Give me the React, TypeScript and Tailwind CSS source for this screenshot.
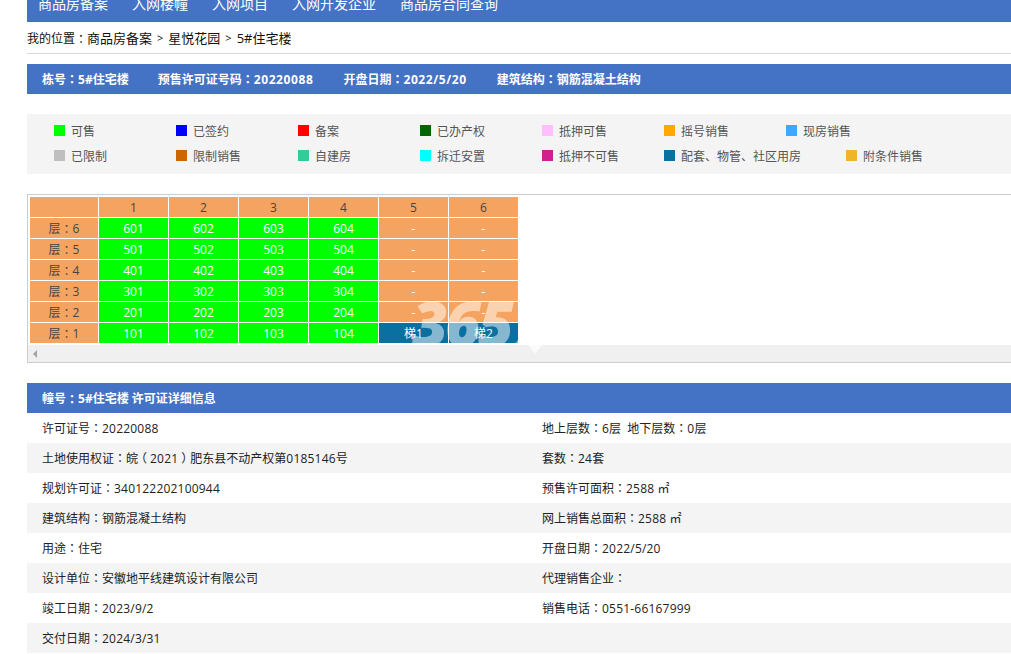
const font = { fontFamily: '"Open Sans", "Noto Sans CJK SC", sans-serif' };

const navItems = ['商品房备案', '入网楼幢', '入网项目', '入网开发企业', '商品房合同查询'];

const legendRows = [
  [
    ['可售', 'bg-[#00ff00]'],
    ['已签约', 'bg-[#0000ff]'],
    ['备案', 'bg-[#ff0000]'],
    ['已办产权', 'bg-[#006400]'],
    ['抵押可售', 'bg-[#ffbfff]'],
    ['摇号销售', 'bg-[#ffa800]'],
    ['现房销售', 'bg-[#3fa7ff]'],
  ],
  [
    ['已限制', 'bg-[#bfbfbf]'],
    ['限制销售', 'bg-[#cc6600]'],
    ['自建房', 'bg-[#33cc99]'],
    ['拆迁安置', 'bg-[#00ffff]'],
    ['抵押不可售', 'bg-[#d02090]'],
    ['配套、物管、社区用房', 'bg-[#0a70a0]'],
    ['附条件销售', 'bg-[#f0b428]'],
  ],
];

const floors = [6, 5, 4, 3, 2, 1];

const details: [string, string][] = [
  ['许可证号：20220088', '地上层数：6层  地下层数：0层'],
  ['土地使用权证：皖（2021）肥东县不动产权第0185146号', '套数：24套'],
  ['规划许可证：340122202100944', '预售许可面积：2588 ㎡'],
  ['建筑结构：钢筋混凝土结构', '网上销售总面积：2588 ㎡'],
  ['用途：住宅', '开盘日期：2022/5/20'],
  ['设计单位：安徽地平线建筑设计有限公司', '代理销售企业：'],
  ['竣工日期：2023/9/2', '销售电话：0551-66167999'],
  ['交付日期：2024/3/31', ''],
];

// the TC cut of the font centres the full-width colon, as the reference does
function Txt({ children, digits = 'tracking-[0.2px]' }: { children: string; digits?: string }) {
  const parts = children.split(/([：（）]|[0-9][0-9/\-]*)/).filter(Boolean);
  return (
    <>
      {parts.map((p, i) => {
        if (p === '：') return <span key={i} className="font-['Noto_Sans_CJK_TC']">{p}</span>;
        if (p === '（') return <span key={i} className="inline-block -translate-x-[3px]">{p}</span>;
        if (p === '）') return <span key={i} className="inline-block translate-x-[3px]">{p}</span>;
        if (/^[0-9]/.test(p)) return <span key={i} className={digits}>{p}</span>;
        return p;
      })}
    </>
  );
}

function Legend() {
  return (
    <div className="mt-5 h-[60px] bg-[#f4f4f4] pl-[27px] pt-[11px] text-xs text-[#555]">
      {legendRows.map((row, i) => (
        <div key={i} className="flex h-[25px]">
          {row.map(([label, color]) => (
            <div key={label} className={`flex items-start ${label.length > 8 ? 'w-[182px]' : 'w-[122px]'}`}>
              <span className={`mr-[6px] h-[11px] w-[11px] shrink-0 ${color}`} />
              <span className="leading-[14px]">{label}</span>
            </div>
          ))}
        </div>
      ))}
    </div>
  );
}

function FloorTable() {
  const cell = 'flex h-5 items-center justify-center pt-px';
  const headCell = `${cell} bg-[#f4a460] text-[#444]`;
  return (
    <div className="relative mt-5 h-[169px] overflow-hidden border border-[#cccccc] pl-[2px] pt-[2px] text-xs">
      <div className="grid grid-cols-[68px_repeat(6,69px)] gap-px">
        <div className={headCell} />
        {[1, 2, 3, 4, 5, 6].map((n) => (
          <div key={n} className={headCell}>{n}</div>
        ))}
        {floors.map((f) => (
          <div key={f} className="contents">
            <div className={headCell}><Txt>{`层：${f}`}</Txt></div>
            {[1, 2, 3, 4].map((u) => (
              <div key={u} className={`${cell} bg-[#00ff00] text-white`}>
                {f}0{u}
              </div>
            ))}
            {f === 1
              ? ['梯1', '梯2'].map((t) => (
                  <div key={t} className={`${cell} bg-[#0a70a0] text-white`}>{t}</div>
                ))
              : [0, 1].map((k) => (
                  <div key={k} className={`${cell} bg-[#f4a460] text-white`}>-</div>
                ))}
          </div>
        ))}
      </div>
      <div className="-ml-[2px] mt-[2px] flex h-[17px] items-center bg-[#f0f0f0] pl-[5px]">
        <span className="h-0 w-0 border-y-[4px] border-r-[4px] border-y-transparent border-r-[#a3a3a3]" />
      </div>
      {/* site watermark */}
      <div className="pointer-events-none absolute left-[384px] top-[98px] h-[52px] overflow-hidden whitespace-nowrap text-[62px] font-extrabold italic leading-[58px] tracking-[-3px] text-white/50">
        365淘
      </div>
      <div className="pointer-events-none absolute left-[386px] top-[150px] text-[9px] tracking-[1px] text-white/30">
        www.house365.com
      </div>
      <div className="pointer-events-none absolute left-[500px] top-[150px] h-0 w-0 border-x-[7px] border-t-[9px] border-x-transparent border-t-white/70" />
    </div>
  );
}

function DetailRow({ left, right, shaded }: { left: string; right: string; shaded: boolean }) {
  return (
    <div className={`grid h-[30px] grid-cols-[500px_500px] items-center pt-px text-xs text-[#222] ${shaded ? 'bg-[#f4f4f4]' : ''}`}>
      <div className="pl-[15px]"><Txt>{left}</Txt></div>
      <div className="whitespace-pre-wrap pl-[15px]"><Txt>{right}</Txt></div>
    </div>
  );
}

export default function App() {
  return (
    <div className="h-[654px] w-[1011px] overflow-hidden bg-white" style={font}>
      <div className="ml-[27px] w-[1000px]">
        <nav className="flex h-[22px] items-start overflow-hidden bg-[#4472c4] text-sm text-white">
          <div className="-ml-px -mt-[6px] flex leading-[20px]">
            {navItems.map((n) => (
              <span key={n} className="px-3">{n}</span>
            ))}
          </div>
        </nav>

        <div className="flex h-[32px] items-center border-b border-[#d9d9d9] pt-[2px] text-xs text-[#111]">
          <Txt>我的位置：</Txt>
          <span className="text-[13px]">商品房备案</span>
          <span className="mx-[5px] text-[11px]">&gt;</span>
          <span className="text-[13px]">星悦花园</span>
          <span className="mx-[5px] text-[11px]">&gt;</span>
          <span className="text-[13px]">5#住宅楼</span>
        </div>

        <div className="mt-[10px] flex h-[30px] items-center gap-[30px] bg-[#4472c4] pl-[15px] pt-px text-xs font-bold text-white">
          <span className="-mr-px"><Txt digits="">栋号：5#住宅楼</Txt></span>
          <span><Txt digits="tracking-[0.6px]">预售许可证号码：20220088</Txt></span>
          <span><Txt digits="tracking-[0.6px]">开盘日期：2022/5/20</Txt></span>
          <span><Txt>建筑结构：钢筋混凝土结构</Txt></span>
        </div>

        <Legend />
        <FloorTable />

        <div className="mt-5 flex h-[30px] items-center bg-[#4472c4] pl-[15px] pt-px text-xs font-bold text-white">
          <Txt digits="">幢号：5#住宅楼 许可证详细信息</Txt>
        </div>
        {details.map(([l, r], i) => (
          <DetailRow key={l} left={l} right={r} shaded={i % 2 === 1} />
        ))}
      </div>
    </div>
  );
}
